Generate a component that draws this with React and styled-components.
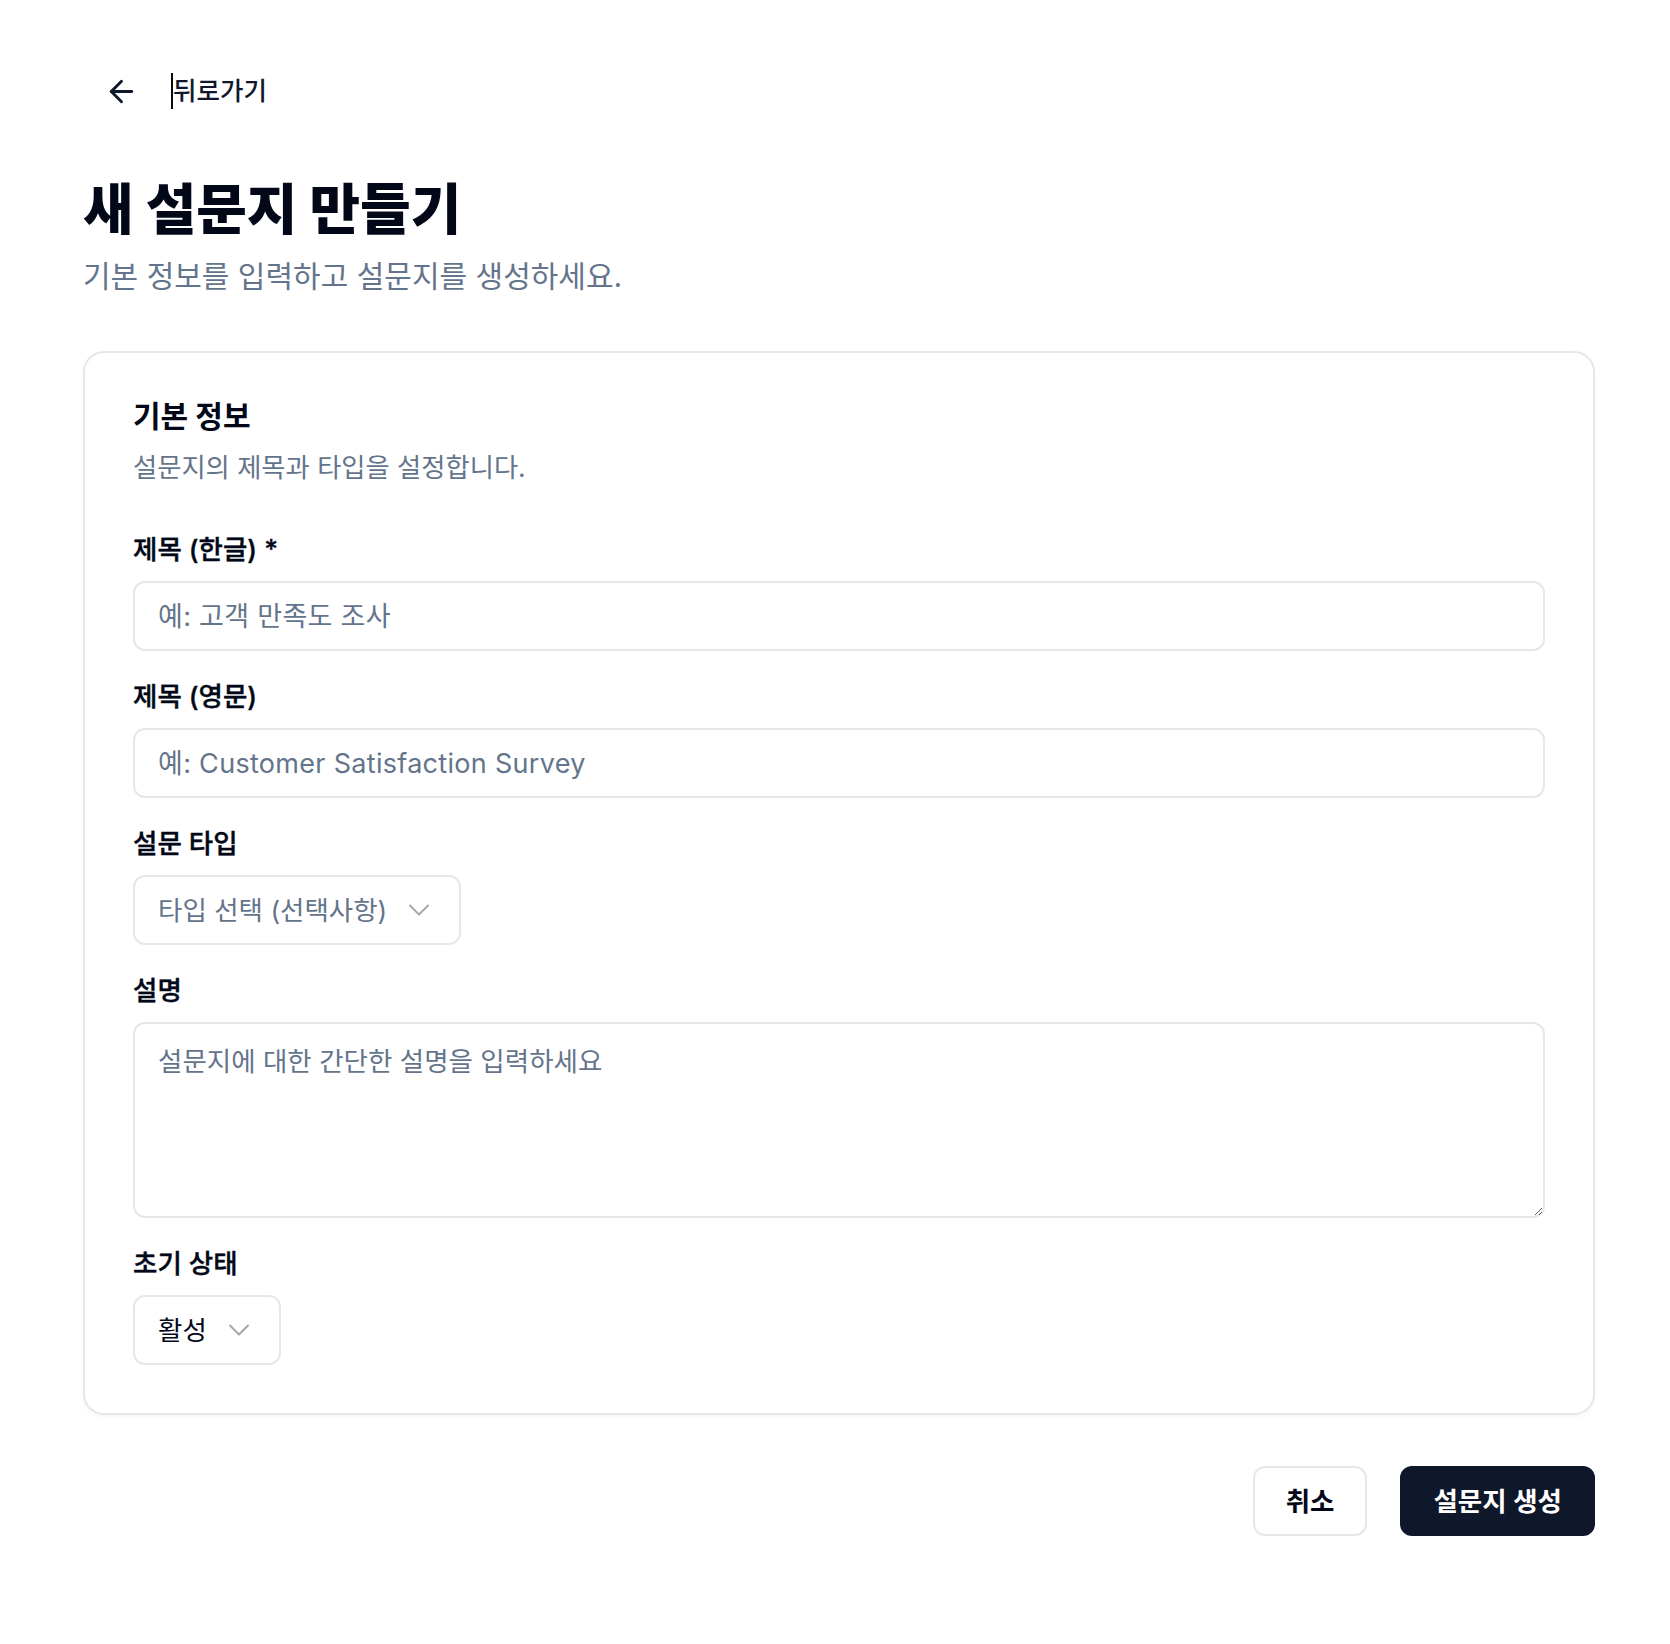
import React from "react";
import styled, { createGlobalStyle } from "styled-components";
import { ArrowLeft, ChevronDown } from "lucide-react";

const fontStack = `Inter, "Noto Sans CJK KR", "Noto Sans", sans-serif`;

const GlobalStyle = createGlobalStyle`
  * {
    box-sizing: border-box;
  }
  body {
    margin: 0;
    background: #fff;
    font-family: ${fontStack};
    color: #020817;
  }
`;

const Page = styled.div`
  width: 1512px;
  margin-left: 83px;
  padding: 56px 0 100px;
`;

const BackButton = styled.button`
  display: inline-flex;
  align-items: center;
  gap: 32px;
  height: 70px;
  padding: 0 21px;
  border: 0;
  border-radius: 10px;
  background: transparent;
  color: #0f172a;
  font-family: ${fontStack};
  font-size: 25.5px;
  font-weight: 500;
  line-height: 1;
  cursor: pointer;
`;

const Caret = styled.span`
  display: inline-flex;
  align-items: center;
  border-left: 2px solid #0a0a0a;
  height: 36px;
`;

const Title = styled.h1`
  margin: 52px 0 0;
  font-size: 55px;
  line-height: 63px;
  font-weight: 800;
  color: #020817;
`;

const Subtitle = styled.p`
  margin: 14px 0 0;
  font-size: 30px;
  line-height: 42px;
  color: #64748b;
`;

const Card = styled.section`
  margin-top: 54px;
  border: 2px solid #e5e7eb;
  border-radius: 21px;
  padding: 48px;
  background: #fff;
  box-shadow: 0 2px 4px rgba(15, 23, 42, 0.04);
`;

const CardTitle = styled.h2`
  margin: 0;
  font-size: 30px;
  line-height: 30px;
  font-weight: 700;
  color: #020817;
`;

const CardDescription = styled.p`
  margin: 19px 0 0;
  font-size: 26.3px;
  line-height: 35px;
  color: #64748b;
`;

const Form = styled.div`
  display: flex;
  flex-direction: column;
  gap: 28px;
  margin-top: 47px;
`;

const Field = styled.div`
  display: flex;
  flex-direction: column;
  gap: 14px;
`;

const Label = styled.label`
  font-size: 26.5px;
  line-height: 35px;
  font-weight: 500;
  -webkit-text-stroke: 0.4px #020817;
  color: #020817;
`;

const Input = styled.input`
  height: 70px;
  width: 100%;
  padding: 0 23px;
  border: 2px solid #e5e7eb;
  border-radius: 12px;
  background: #fff;
  font-family: ${fontStack};
  font-size: 27px;
  letter-spacing: 0.3px;
  color: #020817;
  outline: none;
  &::placeholder {
    color: #64748b;
  }
`;

const TextArea = styled.textarea`
  display: block;
  height: 196px;
  width: 100%;
  padding: 16px 23px;
  border: 2px solid #e5e7eb;
  border-radius: 12px;
  background: #fff;
  font-family: ${fontStack};
  font-size: 26.5px;
  line-height: 42px;
  color: #020817;
  outline: none;
  &::placeholder {
    color: #64748b;
  }
`;

const SelectTrigger = styled.button`
  align-self: flex-start;
  display: inline-flex;
  align-items: center;
  gap: 14px;
  height: 70px;
  padding: 0 22px 0 23px;
  border: 2px solid #e5e7eb;
  border-radius: 12px;
  background: #fff;
  font-family: ${fontStack};
  font-size: 26.5px;
  line-height: 1;
  color: ${props => (props.placeholder ? "#64748b" : "#020817")};
  cursor: pointer;
  svg {
    color: #a3a8b0;
    flex-shrink: 0;
  }
`;

const Actions = styled.div`
  display: flex;
  justify-content: flex-end;
  gap: 33px;
  margin-top: 51px;
`;

const Button = styled.button`
  height: 70px;
  padding: 0 31px;
  border: 2px solid ${props => (props.primary ? "#0f172a" : "#e5e7eb")};
  border-radius: 12px;
  background: ${props => (props.primary ? "#0f172a" : "#fff")};
  color: ${props => (props.primary ? "#fff" : "#020817")};
  font-family: ${fontStack};
  font-size: 26.5px;
  font-weight: 600;
  line-height: 1;
  cursor: pointer;
`;

const Select = ({ value, placeholder }) => (
  <SelectTrigger type="button" placeholder={value ? undefined : "true"}>
    <span>{value || placeholder}</span>
    <ChevronDown size={36} strokeWidth={1.3} />
  </SelectTrigger>
);

export default function App() {
  return (
    <>
      <GlobalStyle />
      <Page>
        <BackButton type="button">
          <ArrowLeft size={35} strokeWidth={2} />
          <Caret>뒤로가기</Caret>
        </BackButton>

        <Title>새 설문지 만들기</Title>
        <Subtitle>기본 정보를 입력하고 설문지를 생성하세요.</Subtitle>

        <Card>
          <CardTitle>기본 정보</CardTitle>
          <CardDescription>설문지의 제목과 타입을 설정합니다.</CardDescription>

          <Form>
            <Field>
              <Label>제목 (한글) *</Label>
              <Input placeholder="예: 고객 만족도 조사" />
            </Field>
            <Field>
              <Label>제목 (영문)</Label>
              <Input placeholder="예: Customer Satisfaction Survey" />
            </Field>
            <Field>
              <Label>설문 타입</Label>
              <Select placeholder="타입 선택 (선택사항)" />
            </Field>
            <Field>
              <Label>설명</Label>
              <TextArea placeholder="설문지에 대한 간단한 설명을 입력하세요" />
            </Field>
            <Field>
              <Label>초기 상태</Label>
              <Select value="활성" />
            </Field>
          </Form>
        </Card>

        <Actions>
          <Button type="button">취소</Button>
          <Button type="button" primary>
            설문지 생성
          </Button>
        </Actions>
      </Page>
    </>
  );
}
